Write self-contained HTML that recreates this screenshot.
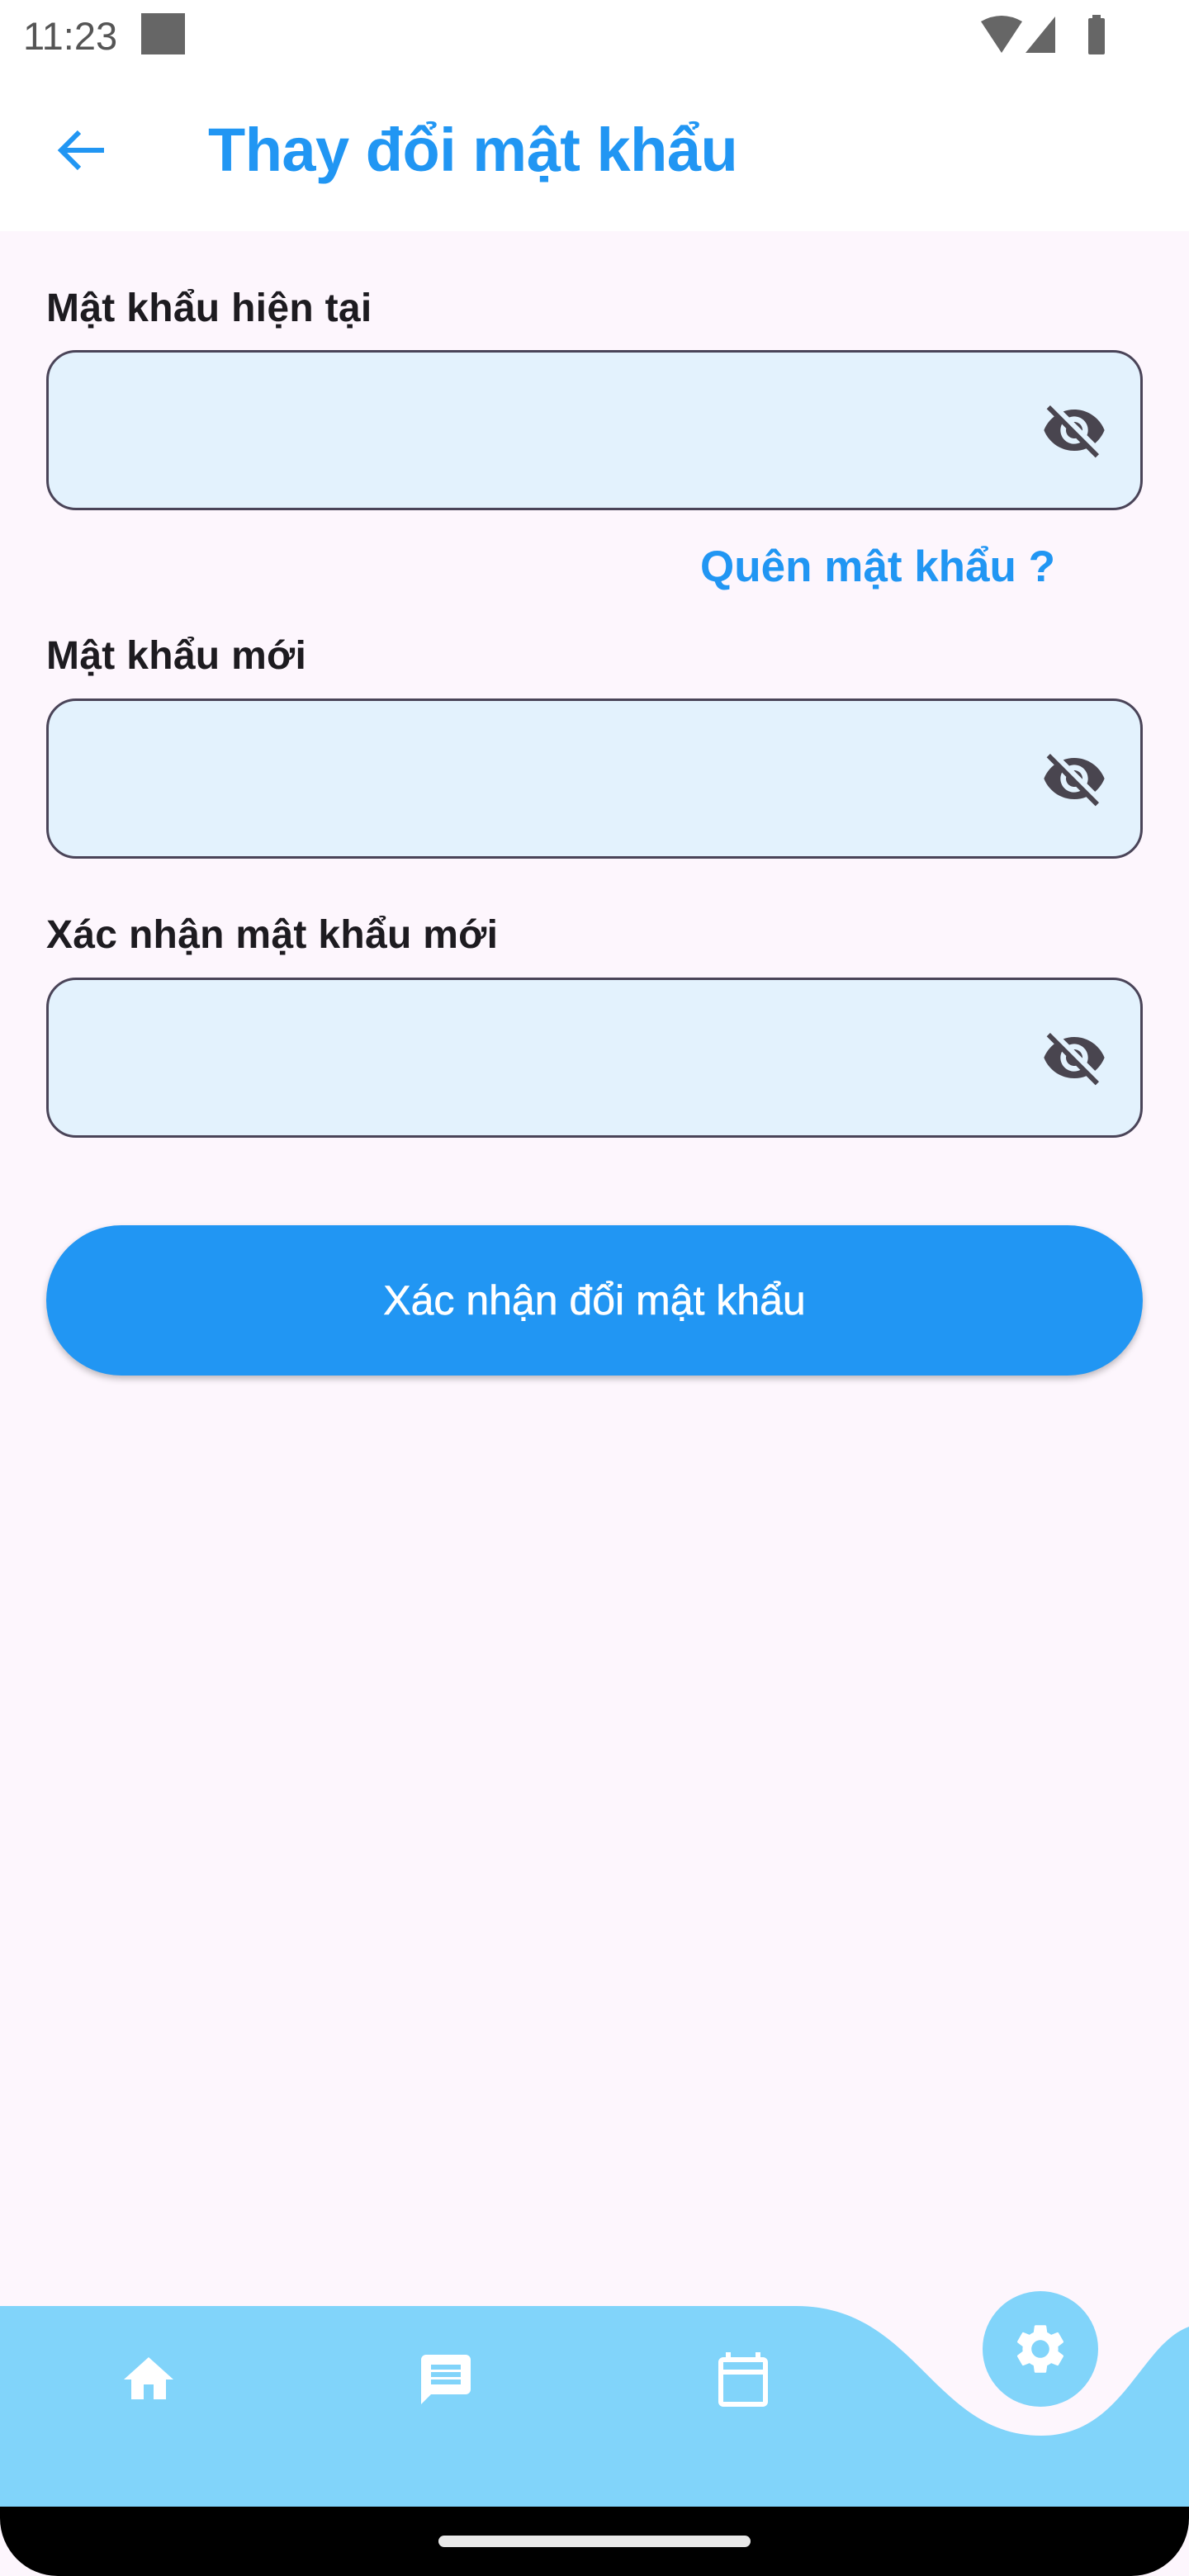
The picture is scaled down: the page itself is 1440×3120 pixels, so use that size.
<!DOCTYPE html>
<html><head><meta charset="utf-8"><style>
*{margin:0;padding:0;box-sizing:border-box}
body{width:1440px;height:3120px;position:relative;background:#FDF6FD;font-family:"Liberation Sans","Noto Sans CJK SC",sans-serif;overflow:hidden}
.top{position:absolute;left:0;top:0;width:1440px;height:280px;background:#fff}
.time{position:absolute;left:28px;top:16px;font-size:47px;color:#555}
.sq{position:absolute;left:171px;top:16px;width:53px;height:50px;background:#666}
.title{position:absolute;left:252px;top:139px;font-size:74px;font-weight:bold;color:#2196F3;letter-spacing:-0.5px}
.lbl{position:absolute;left:56px;font-size:48px;font-weight:bold;color:#1d1b20;letter-spacing:0.3px}
.inp{position:absolute;left:56px;width:1328px;height:194px;border:3px solid #4a4458;border-radius:36px;background:#E3F2FD}
.inp svg{position:absolute;right:40px;top:54px}
.forgot{position:absolute;right:162px;top:656px;font-size:53px;font-weight:bold;color:#2196F3}
.btn{position:absolute;left:56px;top:1484px;width:1328px;height:182px;border-radius:91px;background:#2196F3;color:#fff;font-size:50px;text-align:center;line-height:182px;box-shadow:0 4px 8px rgba(0,0,0,.25);-webkit-text-stroke:0.6px #fff}
.black{position:absolute;left:0;top:3036px;width:1440px;height:84px;background:#000;border-radius:0 0 70px 70px}
.hi{position:absolute;left:531px;top:3071px;width:378px;height:14px;border-radius:7px;background:#e8e8e8}
</style></head><body>
<div class="top">
<div class="time">11:23</div><div class="sq"></div>
<svg style="position:absolute;left:1186px;top:18px" width="100" height="48" viewBox="0 0 100 48"><path d="M2 8 Q27 -6 52 8 L27 46 Z" fill="#666"/><path d="M56 46 L92 2 L92 46 Z" fill="#666"/></svg>
<svg style="position:absolute;left:1314px;top:18px" width="28" height="48"><rect x="4" y="4" width="20" height="44" rx="2" fill="#666"/><rect x="9" y="0" width="10" height="6" fill="#666"/></svg>
<svg style="position:absolute;left:66px;top:156px" width="64" height="52" viewBox="0 0 64 52"><path d="M60 26 H8 M30 4 L8 26 L30 48" stroke="#2196F3" stroke-width="6" fill="none"/></svg>
<div class="title">Thay đổi mật khẩu</div>
</div>

<div class="lbl" style="top:346px">Mật khẩu hiện tại</div>
<div class="inp" style="top:424px"><svg width="80" height="80" viewBox="0 0 24 24"><path fill="#49454f" d="M12 7c2.76 0 5 2.24 5 5 0 .65-.13 1.26-.36 1.83l2.92 2.92c1.51-1.26 2.7-2.89 3.43-4.75-1.73-4.39-6-7.5-11-7.5-1.4 0-2.74.25-3.98.7l2.16 2.16C10.74 7.13 11.35 7 12 7zM2 4.27l2.28 2.28.46.46C3.08 8.3 1.78 10.02 1 12c1.73 4.39 6 7.5 11 7.5 1.55 0 3.03-.3 4.38-.84l.42.42L19.73 22 21 20.73 3.27 3 2 4.27zM7.53 9.8l1.55 1.55c-.05.21-.08.43-.08.65 0 1.66 1.34 3 3 3 .22 0 .44-.03.65-.08l1.55 1.55c-.67.33-1.41.53-2.2.53-2.76 0-5-2.24-5-5 0-.79.2-1.53.53-2.2zm4.31-.78l3.15 3.15.02-.16c0-1.66-1.34-3-3-3l-.17.01z"/></svg></div>
<div class="forgot">Quên mật khẩu ?</div>

<div class="lbl" style="top:767px">Mật khẩu mới</div>
<div class="inp" style="top:846px"><svg width="80" height="80" viewBox="0 0 24 24"><path fill="#49454f" d="M12 7c2.76 0 5 2.24 5 5 0 .65-.13 1.26-.36 1.83l2.92 2.92c1.51-1.26 2.7-2.89 3.43-4.75-1.73-4.39-6-7.5-11-7.5-1.4 0-2.74.25-3.98.7l2.16 2.16C10.74 7.13 11.35 7 12 7zM2 4.27l2.28 2.28.46.46C3.08 8.3 1.78 10.02 1 12c1.73 4.39 6 7.5 11 7.5 1.55 0 3.03-.3 4.38-.84l.42.42L19.73 22 21 20.73 3.27 3 2 4.27zM7.53 9.8l1.55 1.55c-.05.21-.08.43-.08.65 0 1.66 1.34 3 3 3 .22 0 .44-.03.65-.08l1.55 1.55c-.67.33-1.41.53-2.2.53-2.76 0-5-2.24-5-5 0-.79.2-1.53.53-2.2zm4.31-.78l3.15 3.15.02-.16c0-1.66-1.34-3-3-3l-.17.01z"/></svg></div>

<div class="lbl" style="top:1105px">Xác nhận mật khẩu mới</div>
<div class="inp" style="top:1184px"><svg width="80" height="80" viewBox="0 0 24 24"><path fill="#49454f" d="M12 7c2.76 0 5 2.24 5 5 0 .65-.13 1.26-.36 1.83l2.92 2.92c1.51-1.26 2.7-2.89 3.43-4.75-1.73-4.39-6-7.5-11-7.5-1.4 0-2.74.25-3.98.7l2.16 2.16C10.74 7.13 11.35 7 12 7zM2 4.27l2.28 2.28.46.46C3.08 8.3 1.78 10.02 1 12c1.73 4.39 6 7.5 11 7.5 1.55 0 3.03-.3 4.38-.84l.42.42L19.73 22 21 20.73 3.27 3 2 4.27zM7.53 9.8l1.55 1.55c-.05.21-.08.43-.08.65 0 1.66 1.34 3 3 3 .22 0 .44-.03.65-.08l1.55 1.55c-.67.33-1.41.53-2.2.53-2.76 0-5-2.24-5-5 0-.79.2-1.53.53-2.2zm4.31-.78l3.15 3.15.02-.16c0-1.66-1.34-3-3-3l-.17.01z"/></svg></div>

<div class="btn">Xác nhận đổi mật khẩu</div>

<svg style="position:absolute;left:0;top:2760px" width="1440" height="280" viewBox="0 2760 1440 280">
<path d="M0 2793 L964 2793 C1110 2793 1130 2950 1261 2950 C1360 2950 1380 2840 1440 2818 L1440 3040 L0 3040 Z" fill="#81D4FA"/>
<circle cx="1260" cy="2845" r="70" fill="#81D4FA"/>
<g transform="translate(1224,2809) scale(3)" fill="#fff"><path d="M19.14 12.94c.04-.3.06-.61.06-.94 0-.32-.02-.64-.07-.94l2.03-1.58a.49.49 0 00.12-.61l-1.92-3.32a.488.488 0 00-.59-.22l-2.39.96c-.5-.38-1.03-.7-1.62-.94l-.36-2.54a.484.484 0 00-.48-.41h-3.84c-.24 0-.43.17-.47.41l-.36 2.54c-.59.24-1.13.57-1.62.94l-2.39-.96c-.22-.08-.47 0-.59.22L2.74 8.87c-.12.21-.08.47.12.61l2.03 1.58c-.05.3-.09.63-.09.94s.02.64.07.94l-2.03 1.58a.49.49 0 00-.12.61l1.92 3.32c.12.22.37.29.59.22l2.39-.96c.5.38 1.03.7 1.62.94l.36 2.54c.05.24.24.41.48.41h3.84c.24 0 .44-.17.47-.41l.36-2.54c.59-.24 1.13-.56 1.62-.94l2.39.96c.22.08.47 0 .59-.22l1.92-3.32c.12-.22.07-.47-.12-.61l-2.01-1.58zM12 15.6c-1.98 0-3.6-1.62-3.6-3.6s1.62-3.6 3.6-3.6 3.6 1.62 3.6 3.6-1.62 3.6-3.6 3.6z"/></g>
<g transform="translate(144,2846) scale(3)" fill="#fff"><path d="M10 20v-6h4v6h5v-8h3L12 3 2 12h3v8z"/></g>
<g transform="translate(504,2846) scale(3)" fill="#fff"><path d="M20 2H4c-1.1 0-1.99.9-1.99 2L2 22l4-4h14c1.1 0 2-.9 2-2V4c0-1.1-.9-2-2-2zm-2 12H6v-2h12v2zm0-3H6V9h12v2zm0-3H6V6h12v2z"/></g>
<g transform="translate(864,2846) scale(3)" fill="#fff"><path d="M20 3h-1V1h-2v2H7V1H5v2H4c-1.1 0-2 .9-2 2v16c0 1.1.9 2 2 2h16c1.1 0 2-.9 2-2V5c0-1.1-.9-2-2-2zm0 18H4V10h16v11zm0-13H4V5h16v3z"/></g>
</svg>
<div class="black"></div><div class="hi"></div>
</body></html>
